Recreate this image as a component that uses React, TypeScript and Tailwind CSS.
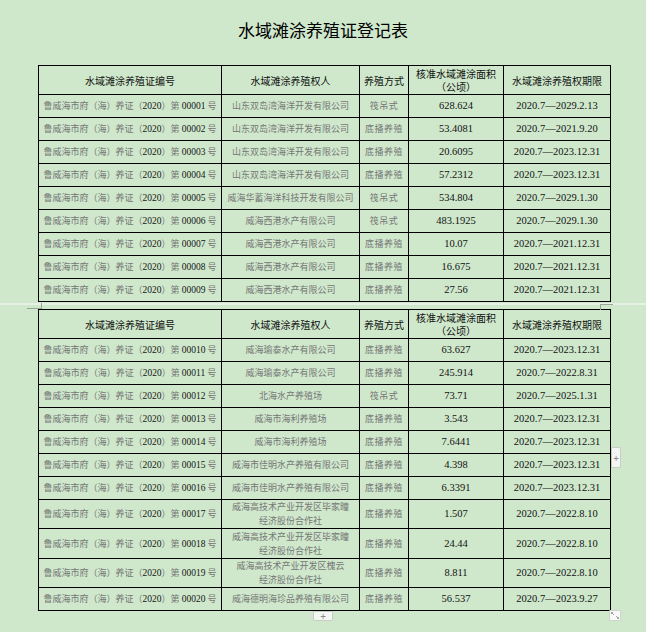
import React from "react";

type Row = { no: string; owner: string[]; mode: string; area: string; term: string; h?: number };

const t1: Row[] = [
  { no: "00001", owner: ["山东双岛湾海洋开发有限公司"], mode: "筏吊式", area: "628.624", term: "2020.7—2029.2.13" },
  { no: "00002", owner: ["山东双岛湾海洋开发有限公司"], mode: "底播养殖", area: "53.4081", term: "2020.7—2021.9.20" },
  { no: "00003", owner: ["山东双岛湾海洋开发有限公司"], mode: "底播养殖", area: "20.6095", term: "2020.7—2023.12.31" },
  { no: "00004", owner: ["山东双岛湾海洋开发有限公司"], mode: "底播养殖", area: "57.2312", term: "2020.7—2023.12.31" },
  { no: "00005", owner: ["威海华蓄海洋科技开发有限公司"], mode: "筏吊式", area: "534.804", term: "2020.7—2029.1.30" },
  { no: "00006", owner: ["威海西港水产有限公司"], mode: "筏吊式", area: "483.1925", term: "2020.7—2029.1.30" },
  { no: "00007", owner: ["威海西港水产有限公司"], mode: "底播养殖", area: "10.07", term: "2020.7—2021.12.31" },
  { no: "00008", owner: ["威海西港水产有限公司"], mode: "底播养殖", area: "16.675", term: "2020.7—2021.12.31" },
  { no: "00009", owner: ["威海西港水产有限公司"], mode: "底播养殖", area: "27.56", term: "2020.7—2021.12.31" },
];

const t2: Row[] = [
  { no: "00010", owner: ["威海瑜泰水产有限公司"], mode: "底播养殖", area: "63.627", term: "2020.7—2023.12.31" },
  { no: "00011", owner: ["威海瑜泰水产有限公司"], mode: "底播养殖", area: "245.914", term: "2020.7—2022.8.31" },
  { no: "00012", owner: ["北海水产养殖场"], mode: "筏吊式", area: "73.71", term: "2020.7—2025.1.31" },
  { no: "00013", owner: ["威海市海利养殖场"], mode: "底播养殖", area: "3.543", term: "2020.7—2023.12.31" },
  { no: "00014", owner: ["威海市海利养殖场"], mode: "底播养殖", area: "7.6441", term: "2020.7—2023.12.31" },
  { no: "00015", owner: ["威海市佳明水产养殖有限公司"], mode: "底播养殖", area: "4.398", term: "2020.7—2023.12.31" },
  { no: "00016", owner: ["威海市佳明水产养殖有限公司"], mode: "底播养殖", area: "6.3391", term: "2020.7—2023.12.31" },
  { no: "00017", owner: ["威海高技术产业开发区毕家疃", "经济股份合作社"], mode: "底播养殖", area: "1.507", term: "2020.7—2022.8.10", h: 29 },
  { no: "00018", owner: ["威海高技术产业开发区毕家疃", "经济股份合作社"], mode: "底播养殖", area: "24.44", term: "2020.7—2022.8.10", h: 30 },
  { no: "00019", owner: ["威海高技术产业开发区槐云", "经济股份合作社"], mode: "底播养殖", area: "8.811", term: "2020.7—2022.8.10", h: 29 },
  { no: "00020", owner: ["威海德明海珍品养殖有限公司"], mode: "底播养殖", area: "56.537", term: "2020.7—2023.9.27" },
];

const cjk = "font-['Noto_Sans_CJK_SC','Noto_Sans',sans-serif]";
const serif = "font-['Liberation_Serif','Noto_Sans_CJK_SC',serif]";
const td = "border border-black p-0 text-center align-middle";

function Header() {
  return (
    <tr className="h-[29px]">
      <td className={`${td} text-[10px] leading-[13px] text-[#111] ${cjk}`}>水域滩涂养殖证编号</td>
      <td className={`${td} text-[10px] leading-[13px] text-[#111] ${cjk}`}>水域滩涂养殖权人</td>
      <td className={`${td} text-[10px] leading-[13px] text-[#111] ${cjk}`}>养殖方式</td>
      <td className={`${td} text-[10px] leading-[13.5px] text-[#111] ${cjk}`}>
        <div>核准水域滩涂面积</div>
        <div>（公顷）</div>
      </td>
      <td className={`${td} text-[10px] leading-[13px] text-[#111] ${cjk}`}>水域滩涂养殖权期限</td>
    </tr>
  );
}

function DataRow({ r }: { r: Row }) {
  return (
    <tr style={{ height: r.h ?? 23 }}>
      <td className={`${td} whitespace-nowrap text-[9px] leading-[12px] text-[#767676] ${cjk}`}>
        鲁威海市府（海）养证（<span className={`text-[#151515] ${serif} text-[9.5px]`}>2020</span>）第{" "}
        <span className={`text-[#151515] ${serif} text-[9.5px]`}>{r.no}</span> 号
      </td>
      <td className={`${td} text-[9px] leading-[14px] text-[#767676] ${cjk}`}>
        {r.owner.map((o) => (
          <div key={o}>{o}</div>
        ))}
      </td>
      <td className={`${td} text-[9px] leading-[12px] tracking-[0.5px] text-[#767676] ${cjk}`}>{r.mode}</td>
      <td className={`${td} text-[10.5px] leading-[12px] text-[#111] ${serif}`}>{r.area}</td>
      <td className={`${td} whitespace-nowrap text-[10.5px] leading-[12px] text-[#111] ${serif}`}>{r.term}</td>
    </tr>
  );
}

function Table({ rows }: { rows: Row[] }) {
  return (
    <table className="w-[572px] table-fixed border-collapse">
      <colgroup>
        <col className="w-[183px]" />
        <col className="w-[138px]" />
        <col className="w-[49px]" />
        <col className="w-[95px]" />
        <col className="w-[107px]" />
      </colgroup>
      <tbody>
        <Header />
        {rows.map((r) => (
          <DataRow key={r.no} r={r} />
        ))}
      </tbody>
    </table>
  );
}

export default function App() {
  return (
    <div className="relative h-[632px] w-[646px] overflow-hidden bg-[#cfe8cc]">
      <div className="flex flex-col items-center pt-[19px]">
        <h1 className={`text-[17px] leading-[22px] text-black ${cjk}`}>水域滩涂养殖证登记表</h1>
      </div>
      <div className="ml-[38px] mt-[24px]">
        <Table rows={t1} />
      </div>
      {/* page break */}
      <div className="relative h-[7px]">
        <div className="absolute left-0 right-0 top-[1px] h-[2px] bg-[#e9f0e7]" />
        <div className="absolute left-[27px] top-[6px] h-px w-[14px] bg-[#9aa597]" />
        <div className="absolute left-[41px] top-[1px] h-[6px] w-px bg-[#9aa597]" />
        <div className="absolute left-[600px] top-[2px] h-px w-[13px] bg-[#9aa597]" />
        <div className="absolute left-[600px] top-[2px] h-[6px] w-px bg-[#9aa597]" />
      </div>
      <div className="ml-[38px]">
        <Table rows={t2} />
      </div>
      {/* table handles */}
      <div className="absolute left-[313px] top-[611px] flex h-[10px] w-[20px] items-center justify-center rounded-b-[2px] border border-[#c8cdc6] bg-[#f4f6f3] text-[10px] leading-none text-[#8a8a8a]">
        +
      </div>
      <div className="absolute left-[611px] top-[447px] flex h-[21px] w-[10px] items-center justify-center rounded-r-[2px] border border-[#c8cdc6] bg-[#f4f6f3] text-[10px] leading-none text-[#8a8a8a]">
        +
      </div>
      <div className="absolute left-[609px] top-[610px] h-[11px] w-[12px] rounded-[1px] border border-[#d0d4cf] bg-[#f8f9f8]">
        <svg width="10" height="9" viewBox="0 0 10 9" className="absolute left-0 top-0">
          <path d="M1.5 1.5 L4 4 M1.5 1.5 L1.5 3 M1.5 1.5 L3 1.5 M8.5 7.5 L6 5 M8.5 7.5 L8.5 6 M8.5 7.5 L7 7.5" stroke="#8a8f8a" strokeWidth="0.8" fill="none" />
        </svg>
      </div>
    </div>
  );
}
